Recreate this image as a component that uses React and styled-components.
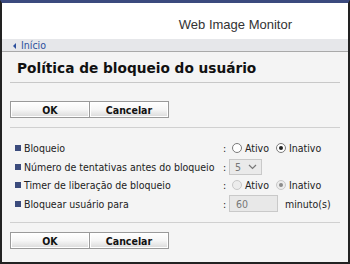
import React from "react";
import styled, { createGlobalStyle } from "styled-components";

const GlobalStyle = createGlobalStyle`
	html, body {
		margin: 0;
		padding: 0;
		background: #f4f4f4;
	}
	body {
		font-family: "DejaVu Sans Condensed", "DejaVu Sans", Verdana, sans-serif;
	}
`;

const Frame = styled.div`
	width: 350px;
	height: 264px;
	box-sizing: border-box;
	border: 2px solid #222;
	border-top: 3px solid #3b4a7e;
	background: #f4f4f4;
	display: flex;
	flex-direction: column;
	overflow: hidden;
`;

const Header = styled.div`
	height: 36px;
	box-sizing: border-box;
	padding: 6px 56px 0 0;
	background: #fff;
	display: flex;
	align-items: center;
	justify-content: flex-end;
	font-family: "Liberation Sans", Arial, sans-serif;
	font-size: 13px;
	color: #333;
`;

const NavBar = styled.div`
	height: 12px;
	background: #e6e7ea;
	border-bottom: 1px solid #a9a9a9;
	display: flex;
	align-items: center;
	padding-left: 11px;
	font-size: 10.5px;
	color: #2c4f9c;
	gap: 5px;
`;

const Arrow = styled.span`
	width: 0;
	height: 0;
	border-top: 3px solid transparent;
	border-bottom: 3px solid transparent;
	border-right: 3px solid #2c4f9c;
	margin-top: 2px;
`;

const Content = styled.div`
	padding: 0 8px;
	display: flex;
	flex-direction: column;
`;

const Title = styled.h1`
	margin: 0;
	padding: 8px 0 0 7px;
	height: 22px;
	font-family: "DejaVu Sans", Verdana, sans-serif;
	font-size: 13.7px;
	font-weight: bold;
	color: #111;
	border-bottom: 1px solid #c8c8c8;
`;

const ButtonRow = styled.div`
	display: flex;
	margin-top: ${(p) => p.$top}px;
	padding-bottom: ${(p) => p.$bottom}px;
	border-bottom: ${(p) => (p.$line ? "1px solid #d0d0d0" : "none")};
`;

const Button = styled.button`
	width: ${(p) => (p.$first ? "80px" : "79px")};
	height: 17px;
	border: 1px solid #9a9a9a;
	border-left: ${(p) => (p.$first ? "1px solid #9a9a9a" : "none")};
	background: linear-gradient(#ffffff 0%, #f6f6f6 50%, #dadada 100%);
	font-family: "DejaVu Sans Condensed", "DejaVu Sans", sans-serif;
	font-size: 10.5px;
	font-weight: bold;
	color: #111;
	padding: 0;
	box-shadow: inset 0 0 0 1px #fff;
`;

const Settings = styled.div`
	display: flex;
	flex-direction: column;
	padding: 11px 0 9px 5px;
	border-bottom: 1px solid #d0d0d0;
`;

const Row = styled.div`
	display: grid;
	grid-template-columns: 208px 6px 1fr;
	align-items: center;
	height: 18.5px;
	font-size: 10.5px;
	color: #222;
	white-space: nowrap;
`;

const Label = styled.div`
	display: flex;
	align-items: center;
	gap: 3px;
`;

const Bullet = styled.span`
	width: 6px;
	height: 6px;
	background: #3b4b7c;
`;

const Field = styled.div`
	display: flex;
	align-items: center;
	gap: 3px;
`;

const Radio = styled.span`
	width: 10px;
	height: 10px;
	box-sizing: border-box;
	border-radius: 50%;
	border: 1px solid ${(p) => (p.$disabled ? "#c8c8c8" : "#7a7a7a")};
	background: ${(p) => (p.$disabled ? "#ececec" : "#fff")};
	display: inline-flex;
	align-items: center;
	justify-content: center;
	margin-left: ${(p) => (p.$gap ? "4px" : "3px")};
	&::after {
		content: "";
		display: ${(p) => (p.$checked ? "block" : "none")};
		width: 4px;
		height: 4px;
		border-radius: 50%;
		background: ${(p) => (p.$disabled ? "#8a8a8a" : "#222")};
	}
`;

const Select = styled.div`
	width: 33px;
	height: 16px;
	box-sizing: border-box;
	border: 1px solid #c9c9c9;
	background: #eaeaea;
	display: flex;
	align-items: center;
	justify-content: space-between;
	padding: 0 4px 0 5px;
	color: #777;
`;

const Input = styled.div`
	width: 49px;
	height: 17px;
	box-sizing: border-box;
	border: 1px solid #c9c9c9;
	background: #e8e8e8;
	display: flex;
	align-items: center;
	padding-left: 6px;
	color: #777;
	margin-right: 4px;
`;

const App = () => {
	return (
		<>
			<GlobalStyle />
			<Frame>
				<Header>Web Image Monitor</Header>
				<NavBar>
					<Arrow />
					Início
				</NavBar>
				<Content>
					<Title>Política de bloqueio do usuário</Title>
					<ButtonRow $top={18} $bottom={9} $line>
						<Button $first>OK</Button>
						<Button>Cancelar</Button>
					</ButtonRow>
					<Settings>
						<Row>
							<Label>
								<Bullet />
								Bloqueio
							</Label>
							<span>:</span>
							<Field>
								<Radio />
								Ativo
								<Radio $checked $gap />
								Inativo
							</Field>
						</Row>
						<Row>
							<Label>
								<Bullet />
								Número de tentativas antes do bloqueio
							</Label>
							<span>:</span>
							<Field>
								<Select>
									5
									<svg width="9" height="6" viewBox="0 0 9 6">
										<path d="M1 1 L4.5 4.5 L8 1" fill="none" stroke="#777" strokeWidth="1.2" />
									</svg>
								</Select>
							</Field>
						</Row>
						<Row>
							<Label>
								<Bullet />
								Timer de liberação de bloqueio
							</Label>
							<span>:</span>
							<Field>
								<Radio $disabled />
								Ativo
								<Radio $disabled $checked $gap />
								Inativo
							</Field>
						</Row>
						<Row>
							<Label>
								<Bullet />
								Bloquear usuário para
							</Label>
							<span>:</span>
							<Field>
								<Input>60</Input>
								minuto(s)
							</Field>
						</Row>
					</Settings>
					<ButtonRow $top={9} $bottom={0}>
						<Button $first>OK</Button>
						<Button>Cancelar</Button>
					</ButtonRow>
				</Content>
			</Frame>
		</>
	);
};

export default App;
